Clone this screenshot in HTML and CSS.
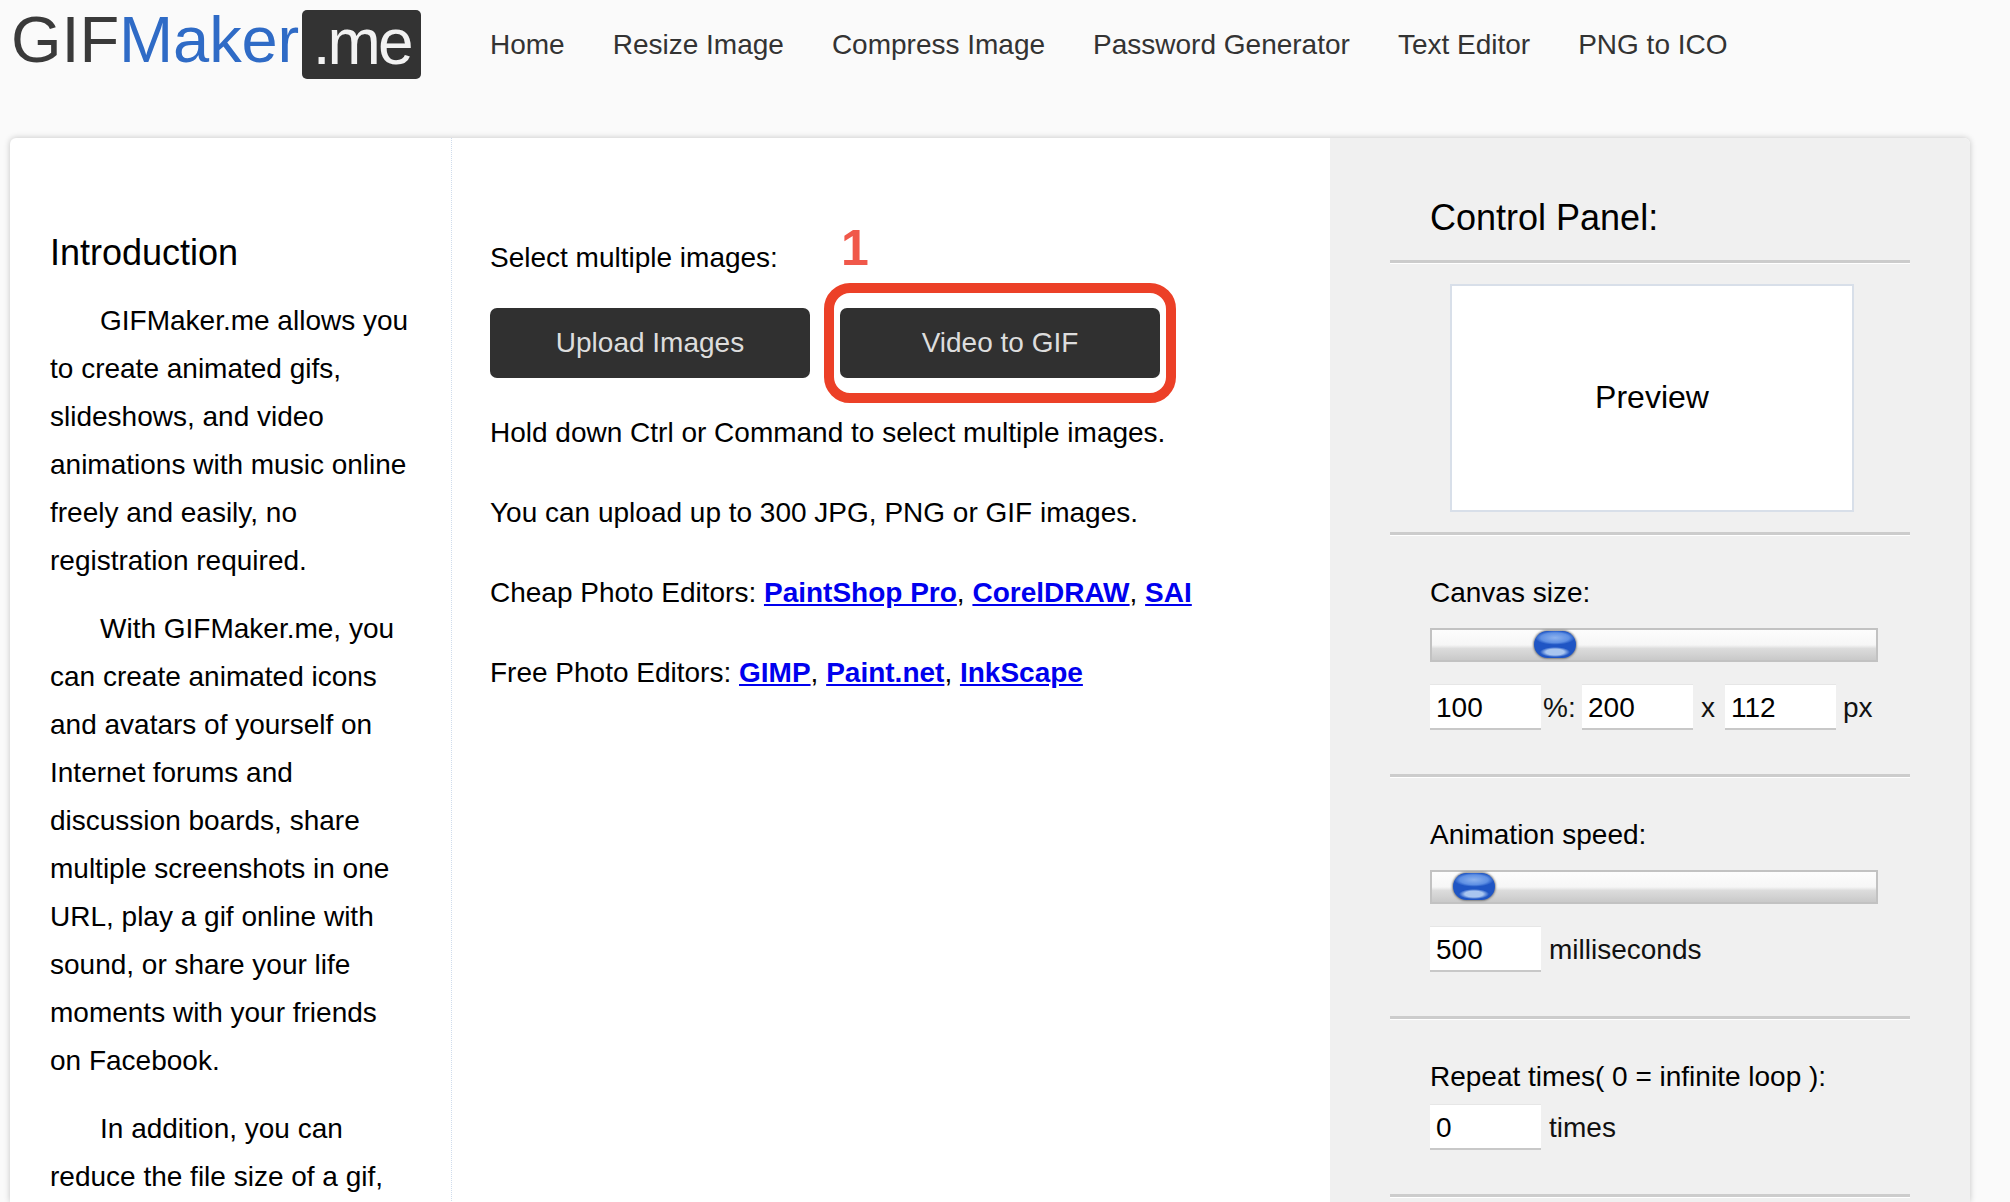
FILE: index.html
```html
<!DOCTYPE html>
<html lang="en">
<head>
<meta charset="utf-8">
<title>GIFMaker.me</title>
<link rel="stylesheet" href="styles.css">
</head>
<body>
<header class="top">
  <a class="logo"><span class="logo-gif">GIF</span><span class="logo-maker">Maker</span><span class="logo-me">.me</span></a>
  <nav class="nav">
    <a>Home</a><a>Resize Image</a><a>Compress Image</a><a>Password Generator</a><a>Text Editor</a><a>PNG to ICO</a>
  </nav>
</header>
<div class="card">
  <aside class="intro">
    <h2>Introduction</h2>
    <p>GIFMaker.me allows you to create animated gifs, slideshows, and video animations with music online freely and easily, no registration required.</p>
    <p>With GIFMaker.me, you can create animated icons and avatars of yourself on Internet forums and discussion boards, share multiple screenshots in one URL, play a gif online with sound, or share your life moments with your friends on Facebook.</p>
    <p>In addition, you can reduce the file size of a gif,</p>
  </aside>
  <main class="main">
    <div class="select-label">Select multiple images:</div>
    <div class="buttons">
      <button class="btn">Upload Images</button>
      <button class="btn">Video to GIF</button>
      <span class="callout"></span>
      <span class="callout-num">1</span>
    </div>
    <p class="line first">Hold down Ctrl or Command to select multiple images.</p>
    <p class="line">You can upload up to 300 JPG, PNG or GIF images.</p>
    <p class="line">Cheap Photo Editors: <a href="#">PaintShop Pro</a>, <a href="#">CorelDRAW</a>, <a href="#">SAI</a></p>
    <p class="line">Free Photo Editors: <a href="#">GIMP</a>, <a href="#">Paint.net</a>, <a href="#">InkScape</a></p>
  </main>
  <section class="panel">
    <h2 class="panel-title">Control Panel:</h2>
    <div class="preview-wrap"><div class="preview">Preview</div></div>
    <div class="group group-canvas">
      <div class="label">Canvas size:</div>
      <div class="slider"><span class="thumb thumb-canvas"></span></div>
      <div class="row">
        <input class="field" value="100"><span class="unit unit-pct">%:</span><input class="field" value="200"><span class="unit unit-x">x</span><input class="field" value="112"><span class="unit unit-px">px</span>
      </div>
    </div>
    <div class="group group-speed">
      <div class="label">Animation speed:</div>
      <div class="slider"><span class="thumb thumb-speed"></span></div>
      <div class="row">
        <input class="field" value="500"><span class="unit unit-after">milliseconds</span>
      </div>
    </div>
    <div class="group group-repeat">
      <div class="label">Repeat times( 0 = infinite loop ):</div>
      <div class="row row-tight">
        <input class="field" value="0"><span class="unit unit-after">times</span>
      </div>
    </div>
  </section>
</div>
</body>
</html>
```

FILE: styles.css
```css
* { box-sizing: border-box; }
html, body { height: 100%; }
body {
  margin: 0;
  background: #fafafa;
  font-family: "Liberation Sans", Arial, sans-serif;
  font-size: 28px;
  color: #000;
  overflow: hidden;
}
.top {
  height: 138px;
  display: flex;
  align-items: flex-start;
  padding: 10px 0 0 11px;
}
.logo {
  display: flex;
  align-items: flex-start;
  width: 479px;
  height: 69px;
  font-size: 65px;
  line-height: 59px;
  letter-spacing: -0.1px;
}
.logo-gif { color: #3a3a3a; }
.logo-maker { color: #2f6bc6; }
.logo-me {
  margin-left: 3px;
  width: 119px;
  height: 69px;
  line-height: 64px;
  font-size: 64px;
  letter-spacing: -3px;
  text-align: center;
  background: #333;
  color: #f2f2f2;
  border-radius: 5px;
}
.nav {
  display: flex;
  gap: 48px;
  padding-top: 19px;
  color: #333;
  line-height: 32px;
}
.card {
  margin: 0 40px 0 10px;
  height: calc(100vh - 138px);
  display: grid;
  grid-template-columns: 442px 878px 640px;
  background: #fff;
  border-radius: 6px 6px 0 0;
  box-shadow: 0 0 6px rgba(0, 0, 0, .22);
  overflow: hidden;
}
.intro {
  padding: 93px 40px 0;
  border-right: 1px dotted #cfdcec;
}
.intro h2 {
  margin: 0 0 22px;
  font-size: 36px;
  font-weight: 400;
  line-height: 44px;
}
.intro p {
  margin: 0 0 20px;
  line-height: 48px;
  text-indent: 50px;
}
.main { padding: 104px 38px 0; }
.select-label { line-height: 32px; }
.buttons {
  position: relative;
  display: flex;
  gap: 30px;
  margin-top: 34px;
}
.btn {
  width: 320px;
  height: 70px;
  border: 0;
  border-radius: 7px;
  background: #303030;
  color: #ddd;
  font: inherit;
}
.callout {
  position: absolute;
  left: 334px;
  top: -25px;
  width: 352px;
  height: 120px;
  border: 10px solid #ec4027;
  border-radius: 26px;
}
.callout-num {
  position: absolute;
  left: 351px;
  top: -90px;
  font-size: 50px;
  font-weight: 700;
  line-height: 60px;
  color: #f0584a;
}
.line {
  margin: 30px 0 0;
  line-height: 50px;
}
.line.first { margin-top: 30px; }
.line a {
  color: #00e;
  font-weight: 700;
}
.panel {
  background: #f0f0f0;
  padding: 0 60px;
}
.panel-title {
  margin: 0;
  padding: 55px 0 0 40px;
  height: 125px;
  font-size: 36px;
  font-weight: 400;
  line-height: 50px;
  border-bottom: 3px solid #ccc;
  box-shadow: 0 1px 0 #fff;
}
.preview-wrap {
  height: 272px;
  padding-top: 21px;
  border-bottom: 3px solid #ccc;
  box-shadow: 0 1px 0 #fff;
}
.preview {
  width: 404px;
  height: 228px;
  margin-left: 60px;
  padding-bottom: 2px;
  display: flex;
  align-items: center;
  justify-content: center;
  background: #fff;
  border: 2px solid #d8dfe9;
  font-size: 32px;
}
.group {
  padding: 40px 0 0 40px;
  border-bottom: 3px solid #ccc;
  box-shadow: 0 1px 0 #fff;
}
.group-canvas { height: 242px; }
.group-speed { height: 242px; }
.group-repeat { height: 178px; }
.label { line-height: 36px; }
.slider {
  position: relative;
  width: 448px;
  height: 34px;
  margin-top: 17px;
  border: 2px solid #c2c2c2;
  background: linear-gradient(#fdfdfd 0, #f6f6f6 50%, #dcdcdc 62%, #c9c9c9 100%);
}
.thumb {
  position: absolute;
  top: 1px;
  width: 42px;
  height: 27px;
  border-radius: 14px;
  background:
    radial-gradient(ellipse 15px 5px at 50% 78%, #a9c6f0 0, #a9c6f0 60%, transparent 100%),
    radial-gradient(ellipse 20px 7px at 50% 25%, #8db2ee 0, #5f90e4 70%, transparent 100%),
    #1f55c4;
  box-shadow: 0 0 2px 1px rgba(60, 60, 60, .55);
}
.thumb-canvas { left: 102px; }
.thumb-speed { left: 21px; }
.row {
  display: flex;
  align-items: center;
  margin-top: 22px;
}
.row-tight { margin-top: 9px; }
.field {
  width: 111px;
  height: 46px;
  padding: 2px 6px 0;
  border: 0;
  border-top: 1px solid #e6e6e6;
  border-bottom: 2px solid #c8c8c8;
  background: #fff;
  color: #000;
  font: inherit;
}
.unit { color: #111; padding-top: 2px; }
.unit-pct { width: 41px; padding-left: 2px; }
.unit-x { width: 32px; padding-left: 8px; }
.unit-px { padding-left: 7px; }
.unit-after { padding-left: 8px; }
```
